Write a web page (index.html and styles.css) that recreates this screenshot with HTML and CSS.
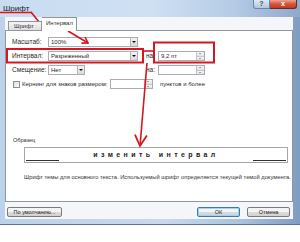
FILE: index.html
```html
<!DOCTYPE html>
<html lang="ru">
<head>
<meta charset="utf-8">
<link rel="stylesheet" href="styles.css">
</head>
<body>
<div class="window">
  <div class="titlebar">
    <span class="title">Шрифт</span>
    <div class="caption-btns">
      <span class="btn-help">?</span>
      <span class="btn-close">x</span>
    </div>
  </div>
  <div class="client">
    <div class="tabs">
      <span class="tab">Шрифт</span>
      <span class="tab active">Интервал</span>
    </div>
    <div class="panel">
      <div class="form">
        <span class="lbl first">Масштаб:</span>
        <div class="combo"><span class="val">100%</span><i class="dd"></i></div>

        <span class="lbl first">Интервал:</span>
        <div class="combo"><span class="val">Разреженный</span><i class="dd"></i></div>
        <span class="lbl na">на:</span>
        <div class="spin"><span class="val">9,2 пт</span><i class="sb"><b class="up"></b><b class="dn"></b></i></div>

        <span class="lbl first">Смещение:</span>
        <div class="combo short"><span class="val">Нет</span><i class="dd"></i></div>
        <span class="lbl na">на:</span>
        <div class="spin"><span class="val"></span><i class="sb"><b class="up"></b><b class="dn"></b></i></div>
      </div>
      <div class="kern">
        <span class="check"></span>
        <span class="kern-lbl">Кернинг для знаков размером:</span>
        <div class="spin kern-spin"><span class="val"></span><i class="sb"><b class="up"></b><b class="dn"></b></i></div>
        <span class="kern-tail">пунктов и более</span>
      </div>
      <div class="sample-label">Образец</div>
      <div class="preview">
        <span class="pline"></span>
        <span class="ptext">изменить интервал</span>
        <span class="pline"></span>
      </div>
      <p class="desc">Шрифт темы для основного текста. Используемый шрифт определяется текущей темой документа.</p>
    </div>
    <div class="buttons">
      <span class="btn">По умолчанию...</span>
      <span class="btn ok">ОК</span>
      <span class="btn cancel">Отмена</span>
    </div>
  </div>
</div>
<svg class="annot" width="300" height="242" viewBox="0 0 300 242">
  <defs>
    <marker id="ah" markerWidth="8" markerHeight="8" refX="6.5" refY="4" orient="auto" markerUnits="userSpaceOnUse">
      <path d="M1,0.5 L6.5,4 L1,7.5" fill="none" stroke="#d7161f" stroke-width="1.6"/>
    </marker>
    <marker id="ahBig" markerWidth="14" markerHeight="14" refX="12" refY="7" orient="auto" markerUnits="userSpaceOnUse">
      <path d="M1,1 L12,7 L1,13" fill="none" stroke="#d7161f" stroke-width="1.8"/>
    </marker>
  </defs>
  <g fill="none" stroke="#d7161f">
    <line x1="0" y1="12.5" x2="32" y2="12.5" stroke-width="1.5"/>
    <line x1="31" y1="12" x2="43" y2="27" stroke-width="1.6" marker-end="url(#ah)"/>
    <line x1="68" y1="31" x2="88" y2="43" stroke-width="1.6" marker-end="url(#ah)"/>
    <rect x="7" y="49" width="136" height="13.5" stroke-width="2"/>
    <line x1="143" y1="51" x2="154" y2="51" stroke-width="1.6"/>
    <rect x="154" y="42.5" width="60" height="20" stroke-width="2"/>
    <line x1="147" y1="63" x2="140" y2="146" stroke-width="1.6" marker-end="url(#ahBig)"/>
  </g>
</svg>
</body>
</html>
```
FILE: styles.css
```css
* { box-sizing: border-box; margin: 0; padding: 0; }
html, body { width: 300px; height: 242px; background: #fff; overflow: hidden; }
body {
  position: relative;
  font-family: "Liberation Sans", Arial, sans-serif;
  font-size: 6.5px;
  color: #2a2a2a;
}
.window {
  width: 300px;
  height: 225px;
  background: linear-gradient(to right, #bcd1ea 0%, #c6d9ef 55%, #aac2de 80%, #7f9cc2 100%);
  border-bottom: 1px solid #5d7190;
  display: flex;
  flex-direction: column;
}
.titlebar {
  height: 17px;
  display: flex;
  align-items: flex-start;
  padding-left: 3px;
  background: linear-gradient(to right, #c9dcf1 0%, #cfe0f3 50%, #b5cbe6 78%, #8ea9cc 100%);
}
.title {
  font-size: 8px;
  line-height: 9px;
  margin-top: 4px;
  color: #222;
}
.caption-btns { margin-left: auto; margin-right: 3px; display: flex; }
.btn-help {
  width: 17px; height: 9px;
  background: linear-gradient(#dfe9f5, #b3c6dd);
  border: 1px solid #6f84a3;
  border-top: none;
  border-radius: 0 0 0 3px;
  font-size: 7px; line-height: 8px; text-align: center; color: #3a4d6a; font-weight: bold;
}
.btn-close {
  width: 27px; height: 9px;
  background: linear-gradient(#e8a493, #d2553a 50%, #c23a22);
  border: 1px solid #6b2a22;
  border-top: none; border-left: none;
  border-radius: 0 0 3px 0;
  font-size: 7px; line-height: 8px; text-align: center; color: #fff; font-weight: bold;
}
.client {
  margin: 0 7px 0 5px;
  height: 202px;
  background: #f4f6f9;
  display: flex;
  flex-direction: column;
}
.tabs {
  height: 13px;
  display: flex;
  align-items: flex-end;
  padding-left: 3px;
  position: relative;
  z-index: 1;
}
.tab {
  width: 34px; height: 9px;
  border: 1px solid #8f9498;
  border-bottom: none;
  background: linear-gradient(#f5f5f5, #dedede);
  font-size: 6px; line-height: 8px;
  padding-left: 5px;
  color: #333;
}
.tab.active {
  width: 35px; height: 14px;
  margin-bottom: -1px;
  background: #fff;
  border-left: none;
  padding-left: 4px;
  line-height: 10px;
}
.panel {
  height: 172px;
  border: 1px solid #8e97a2;
  background: #fff;
  padding: 6px 0 0 6px;
}
.form {
  display: grid;
  grid-template-columns: 36px 90px 20px 47px;
  grid-auto-rows: 10px;
  row-gap: 4px;
  align-items: center;
}
.lbl { line-height: 10px; white-space: nowrap; }
.lbl.first { grid-column: 1; }
.lbl.na { padding-left: 8px; }
.combo, .spin {
  height: 10px;
  border: 1px solid #a9adb4;
  background: #fff;
  display: flex;
  align-items: stretch;
}
.combo.short { width: 37px; }
.val { flex: 1; padding-left: 2px; line-height: 8px; font-size: 6px; white-space: nowrap; overflow: hidden; }
.dd {
  width: 7px;
  background: linear-gradient(#f3f3f3, #d9d9d9);
  border-left: 1px solid #b8b8b8;
  position: relative;
}
.dd::after {
  content: "";
  position: absolute; left: 1px; top: 3px;
  border-left: 2px solid transparent;
  border-right: 2px solid transparent;
  border-top: 2px solid #111;
}
.sb {
  width: 8px;
  display: flex; flex-direction: column;
  border-left: 1px solid #c3c3c3;
}
.sb b {
  flex: 1;
  background: linear-gradient(#f6f6f6, #e2e2e2);
  position: relative;
}
.sb b.up { border-bottom: 1px solid #c8c8c8; }
.sb b::after {
  content: "";
  position: absolute; left: 2px; top: 1px;
  border-left: 1.5px solid transparent;
  border-right: 1.5px solid transparent;
}
.sb b.up::after { border-bottom: 1.5px solid #555; }
.sb b.dn::after { border-top: 1.5px solid #555; top: 1px; }
.kern {
  margin-top: 4px;
  height: 10px;
  display: flex;
  align-items: center;
}
.check {
  width: 7px; height: 7px;
  margin-left: 1px;
  border: 1px solid #8f8f8f;
  background: linear-gradient(135deg, #dcdcdc, #fbfbfb);
}
.kern-lbl { width: 90px; padding-left: 2px; white-space: nowrap; font-size: 6px; }
.kern-spin { width: 43px; }
.kern-tail { margin-left: 7px; font-size: 6px; }
.sample-label {
  margin-top: 48px;
  margin-left: 1px;
  line-height: 7px;
  font-size: 5.5px;
}
.preview {
  margin: 3px 4px 0 12px;
  height: 16px;
  border: 1px solid #a6a6a6;
  display: flex;
  align-items: flex-end;
  padding: 0 1px 1px 1px;
}
.pline { width: 33px; height: 1px; background: #333; }
.ptext {
  flex: 1;
  text-align: center;
  font-weight: bold;
  font-size: 7px;
  letter-spacing: 3.4px;
  line-height: 9px;
  align-self: center;
  color: #222;
}
.desc {
  margin: 10px 0 0 12px;
  font-size: 5.75px;
  line-height: 8px;
  white-space: nowrap;
  color: #333;
}
.buttons {
  display: flex;
  padding: 5px 3px 0 2px;
  gap: 7px;
}
.btn {
  height: 10px;
  width: 43px;
  border: 1px solid #7a7a7a;
  border-radius: 2px;
  background: linear-gradient(#f4f4f4 50%, #dcdcdc 50%, #d2d2d2);
  font-size: 5.5px;
  line-height: 8px;
  text-align: center;
  color: #222;
}
.btn:first-child { width: 55px; }
.btn.ok { margin-left: auto; border-color: #3d7bad; box-shadow: inset 0 0 0 1px #9fd3f2; }
.annot { position: absolute; left: 0; top: 0; pointer-events: none; }
```
